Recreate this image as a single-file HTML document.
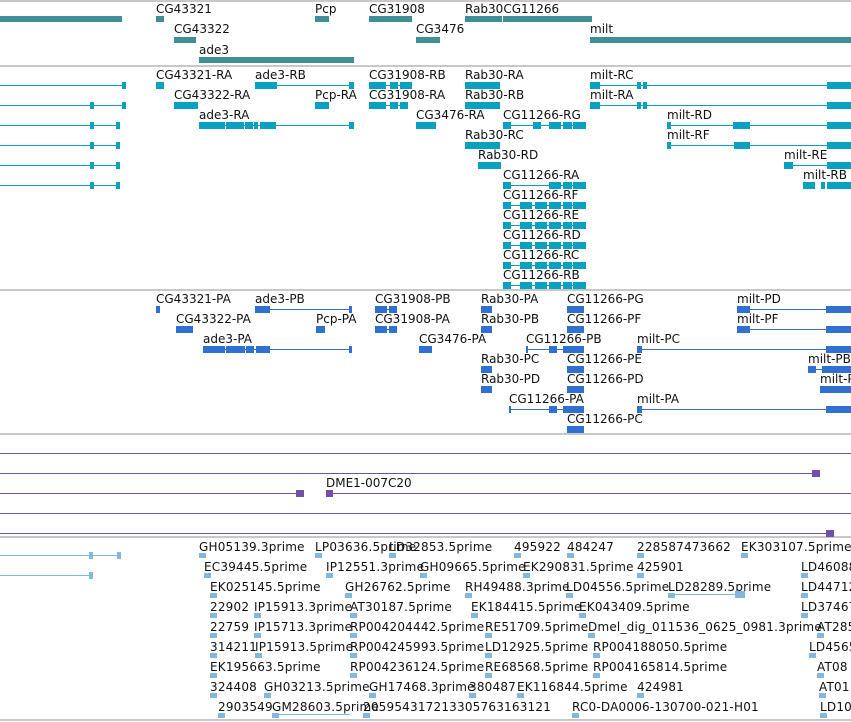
<!DOCTYPE html>
<html><head><meta charset="utf-8">
<style>
body{margin:0;width:851px;height:722px;overflow:hidden;background:#fff;position:relative;font-family:"DejaVu Sans","Liberation Sans",sans-serif;font-size:12px;color:#111}
.t{position:absolute;white-space:nowrap;line-height:14px}
.b{position:absolute}
.c{letter-spacing:0.2px}
</style></head><body>
<div id="r"></div>
<script>
var R=document.getElementById('r'),h='';
function T(x,y,s,c){h+='<div class="t'+(c?' c':'')+'" style="left:'+x+'px;top:'+y+'px">'+s+'</div>';}
function B(x,y,w,hh,col){h+='<div class="b" style="left:'+x+'px;top:'+y+'px;width:'+w+'px;height:'+hh+'px;background:'+col+'"></div>';}
function L(x1,x2,y,col){B(x1,y,x2-x1,1,col);}
function S(y){B(0,y,851,2,'#c8c8c8');}
var G='#3f8f94',C='#0aa0c0',P='#3070d0',V='#7050a8',E='#80b8e0';
S(0);S(65);S(289);S(433);S(536);S(719);
B(0,16,122,6,G);
T(156,2,'CG43321');B(156,16,8,6,G);
T(315,2,'Pcp');B(315,16,14,6,G);
T(369,2,'CG31908');B(369,16,43,6,G);
T(465,2,'Rab30CG11266');B(465,16,37,6,G);B(503,16,89,6,G);
T(174,22,'CG43322');B(174,37,22,6,G);
T(416,22,'CG3476');B(416,37,24,6,G);
T(590,22,'milt');B(590,37,261,6,G);
T(199,43,'ade3');B(199,57,155,6,G);
var rows=[85,105,125,145,165,185,205,225,245,265,285];
L(0,126,85,C);B(122,82,4,7,C);
L(0,126,105,C);B(90,102,4,7,C);B(122,102,4,7,C);
for(var i=2;i<6;i++){L(0,119,rows[i],C);B(90,rows[i]-3,4,7,C);B(116,rows[i]-3,4,7,C);}
function row(y,items,col){items.forEach(function(it){T(it[0],y-17,it[1]);if(it[3])L(it[0],it[3],y,col);(it[2]||[]).forEach(function(p){B(p[0],y-3,p[1],7,col)});});}
row(85,[[156,'CG43321-RA',[[156,8]]],[255,'ade3-RB',[[255,22],[349,5]],354],[369,'CG31908-RB',[[369,17],[390,8],[400,12]],412],[465,'Rab30-RA',[[465,35]]],[590,'milt-RC',[[590,10],[637,4],[643,4]],851]],C);B(827,82,24,7,C);
row(105,[[174,'CG43322-RA',[[174,24]]],[315,'Pcp-RA',[[315,14]]],[369,'CG31908-RA',[[369,17],[390,8],[400,8]],408],[465,'Rab30-RB',[[465,35]]],[590,'milt-RA',[[590,10],[637,4],[643,4]],851]],C);B(827,102,24,7,C);
row(125,[[199,'ade3-RA',[[199,26],[226,18],[245,8],[254,4],[260,16]],354],[416,'CG3476-RA',[[416,20]]],[503,'CG11266-RG',[[503,8],[533,8],[549,12],[563,9],[573,13]],586],[667,'milt-RD',[[667,4],[733,17],[827,24]],851]],C);B(349,122,5,7,C);
row(145,[[465,'Rab30-RC',[[465,35]]],[667,'milt-RF',[[667,4],[734,16],[827,24]],851]],C);
row(165,[[478,'Rab30-RD',[[478,23]]],[784,'milt-RE',[[784,9],[827,24]],851]],C);
row(185,[[503,'CG11266-RA',[[503,8],[549,12],[563,9],[573,13]],586],[803,'milt-RB',[[803,12],[821,4],[827,24]]]],C);
['RF','RE','RD','RC','RB'].forEach(function(s,k){row(205+20*k,[[503,'CG11266-'+s,[[503,8],[520,12],[535,12],[549,12],[563,9],[573,13]],586]],C);});
row(309,[[156,'CG43321-PA',[[156,4]]],[255,'ade3-PB',[[255,15],[349,3]],351],[375,'CG31908-PB',[[375,12],[389,8]],397],[481,'Rab30-PA',[[481,11]]],[567,'CG11266-PG',[[567,17]]],[737,'milt-PD',[[737,13],[826,25]],851]],P);
row(329,[[176,'CG43322-PA',[[176,17]]],[316,'Pcp-PA',[[316,9]]],[375,'CG31908-PA',[[375,12],[389,8]],397],[481,'Rab30-PB',[[481,11]]],[567,'CG11266-PF',[[567,17]]],[737,'milt-PF',[[737,13],[826,25]],851]],P);
row(349,[[203,'ade3-PA',[[203,22],[226,19],[246,8],[256,14],[349,3]],351],[419,'CG3476-PA',[[419,13]]],[526,'CG11266-PB',[[526,2],[549,8],[563,21]],584],[637,'milt-PC',[[637,5],[826,25]],851]],P);
row(369,[[481,'Rab30-PC',[[481,11]]],[567,'CG11266-PE',[[567,17]]],[808,'milt-PB',[[808,8],[822,29]],851]],P);
row(389,[[481,'Rab30-PD',[[481,11]]],[567,'CG11266-PD',[[567,17]]],[820,'milt-P',[[820,31]]]],P);
row(409,[[509,'CG11266-PA',[[509,2],[549,8],[563,21]],584],[637,'milt-PA',[[637,5],[826,25]],851]],P);
row(429,[[567,'CG11266-PC',[[567,17]]]],P);
L(0,851,453,V);L(0,820,473,V);B(812,470,8,7,V);
L(0,304,493,V);B(296,490,8,7,V);T(326,476,'DME1-007C20');L(326,851,493,V);B(326,490,7,7,V);
L(0,851,513,V);L(0,834,533,V);B(826,530,8,7,V);
L(0,121,555,E);B(89,552,4,7,E);B(117,552,4,7,E);L(0,93,575,E);B(89,572,4,7,E);
var est=[
[[199,'GH05139.3prime'],[315,'LP03636.5prime'],[389,'LD32853.5prime'],[514,'495922'],[567,'484247'],[637,'228587473662'],[741,'EK303107.5prime']],
[[204,'EC39445.5prime'],[326,'IP12551.3prime'],[420,'GH09665.5prime'],[523,'EK290831.5prime'],[637,'425901'],[801,'LD46088']],
[[210,'EK025145.5prime'],[345,'GH26762.5prime'],[465,'RH49488.3prime'],[566,'LD04556.5prime'],[668,'LD28289.5prime'],[801,'LD44712']],
[[210,'22902'],[254,'IP15913.3prime'],[350,'AT30187.5prime'],[471,'EK184415.5prime'],[579,'EK043409.5prime'],[801,'LD37467']],
[[210,'22759'],[254,'IP15713.3prime'],[350,'RP004204442.5prime'],[485,'RE51709.5prime'],[588,'Dmel_dig_011536_0625_0981.3prime'],[817,'AT285']],
[[210,'314211'],[255,'IP15913.5prime'],[350,'RP004245993.5prime'],[485,'LD12925.5prime'],[593,'RP004188050.5prime'],[809,'LD4565']],
[[210,'EK195663.5prime'],[350,'RP004236124.5prime'],[485,'RE68568.5prime'],[593,'RP004165814.5prime'],[817,'AT08']],
[[210,'324408'],[264,'GH03213.5prime'],[369,'GH17468.3prime'],[469,'380487'],[517,'EK116844.5prime'],[637,'424981'],[819,'AT01']],
[[218,'2903549'],[272,'GM28603.5prime'],[363,'205954317213305763163121'],[572,'RC0-DA0006-130700-021-H01'],[820,'LD10']]];
est.forEach(function(r,k){var y=540+20*k;r.forEach(function(it){T(it[0],y,it[1],1);B(it[0],y+13,7,5,E);});});
L(668,745,594,E);B(735,591,10,7,E);L(272,350,714,E);
R.innerHTML=h;
</script>
</body></html>
